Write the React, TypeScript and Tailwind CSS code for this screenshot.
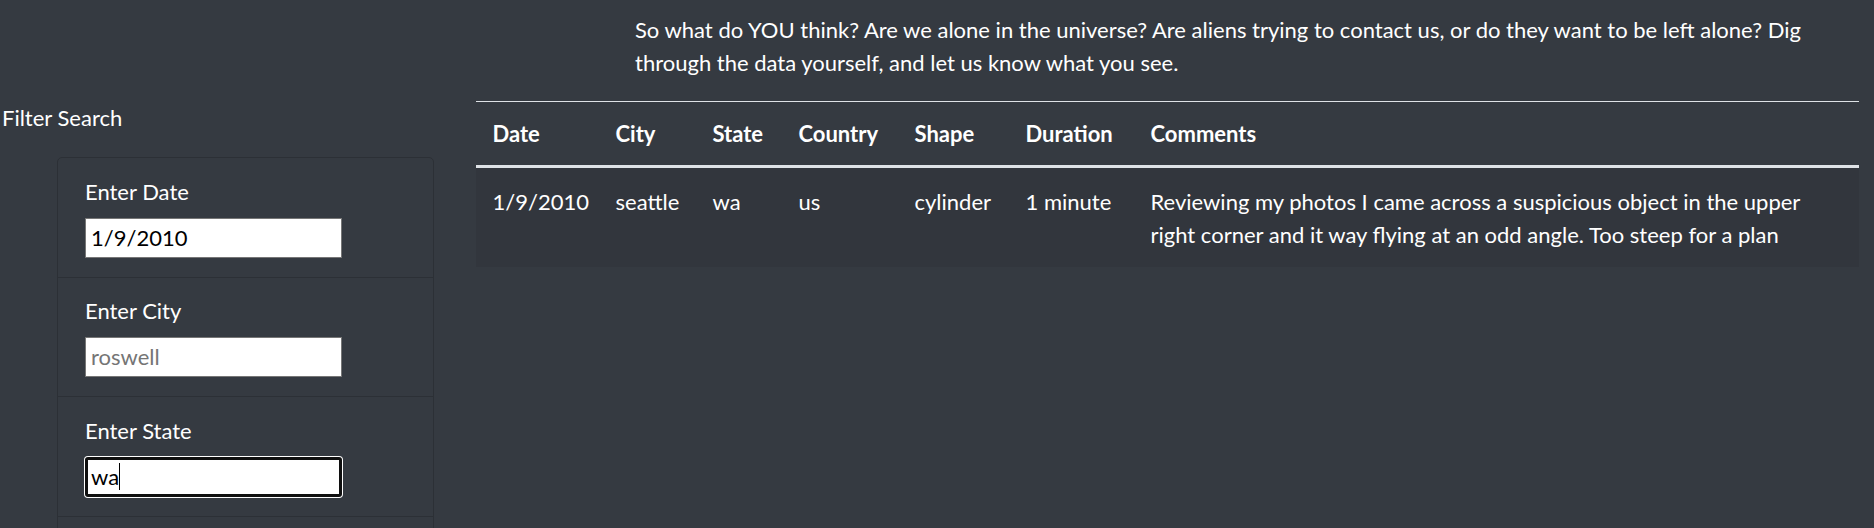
import React from 'react';

const FONT = { fontFamily: 'Lato, "Noto Sans", sans-serif' };

const COLS: { label: string; w: string }[] = [
  { label: 'Date',     w: 'w-[123px]' },
  { label: 'City',     w: 'w-[97px]' },
  { label: 'State',    w: 'w-[86px]' },
  { label: 'Country',  w: 'w-[116px]' },
  { label: 'Shape',    w: 'w-[111px]' },
  { label: 'Duration', w: 'w-[125px]' },
  { label: 'Comments', w: 'w-[725px]' },
];

function FilterItem({ label, children, last }: { label: string; children: React.ReactNode; last?: boolean }) {
  return (
    <li className={`px-[27px] pt-[16.5px] pb-[19px] ${last ? '' : 'border-b border-[#2c3036]'}`}>
      <div className="leading-[33px] mb-[10px]">{label}</div>
      {children}
    </li>
  );
}

export default function App() {
  return (
    <div className="min-h-screen bg-[#353a41] text-white text-[22px] flex" style={FONT}>
      {/* 필터 영역 */}
      <div className="w-[476px] shrink-0 pt-[101px]">
        <h5 className="pl-[2px] leading-[33px]">Filter Search</h5>
        <ul className="ml-[57px] mt-[23px] w-[377px] border border-[#2c3036] rounded-[5px]">
          <FilterItem label="Enter Date">
            <div className="w-[257px] h-[40px] bg-white border border-[#767676] px-[5px] leading-[38px] text-black">1/9/2010</div>
          </FilterItem>
          <FilterItem label="Enter City">
            <div className="w-[257px] h-[40px] bg-white border border-[#767676] px-[5px] leading-[38px] text-[#757575]">roswell</div>
          </FilterItem>
          <FilterItem label="Enter State">
            <div className="w-[257px] h-[40px] bg-white border-[3px] border-[#101010] rounded-[3px] ring-1 ring-white px-[3px] leading-[34px] text-black flex items-center">
              <span>wa</span>
              <span className="w-px h-[27px] bg-black" />
            </div>
          </FilterItem>
          <li className="h-[40px]" />
        </ul>
      </div>

      {/* 본문 + 테이블 */}
      <div className="w-[1383px] shrink-0 flex flex-col">
        <p className="pl-[159px] pt-[13px] leading-[33px] whitespace-nowrap">
          So what do YOU think? Are we alone in the universe? Are aliens trying to contact us, or do they want to be left alone? Dig
          <br />
          through the data yourself, and let us know what you see.
        </p>
        <table className="mt-[22px] w-full table-fixed border-collapse">
          <colgroup>
            {COLS.map(c => <col key={c.label} className={c.w} />)}
          </colgroup>
          <thead>
            <tr>
              {COLS.map(c => (
                <th key={c.label} className="text-left font-bold px-[16.5px] py-[15px] leading-[33px] border-t border-b-[3px] border-[#dee2e6]">
                  {c.label}
                </th>
              ))}
            </tr>
          </thead>
          <tbody>
            <tr className="bg-[#32363d]">
              <td className="px-[16.5px] py-[16.5px] align-top leading-[33px]">1/9/2010</td>
              <td className="px-[16.5px] py-[16.5px] align-top leading-[33px]">seattle</td>
              <td className="px-[16.5px] py-[16.5px] align-top leading-[33px]">wa</td>
              <td className="px-[16.5px] py-[16.5px] align-top leading-[33px]">us</td>
              <td className="px-[16.5px] py-[16.5px] align-top leading-[33px]">cylinder</td>
              <td className="px-[16.5px] py-[16.5px] align-top leading-[33px]">1 minute</td>
              <td className="px-[16.5px] py-[16.5px] align-top leading-[33px] whitespace-nowrap">
                Reviewing my photos I came across a suspicious object in the upper
                <br />
                right corner and it way flying at an odd angle. Too steep for a plan
              </td>
            </tr>
          </tbody>
        </table>
      </div>
    </div>
  );
}
